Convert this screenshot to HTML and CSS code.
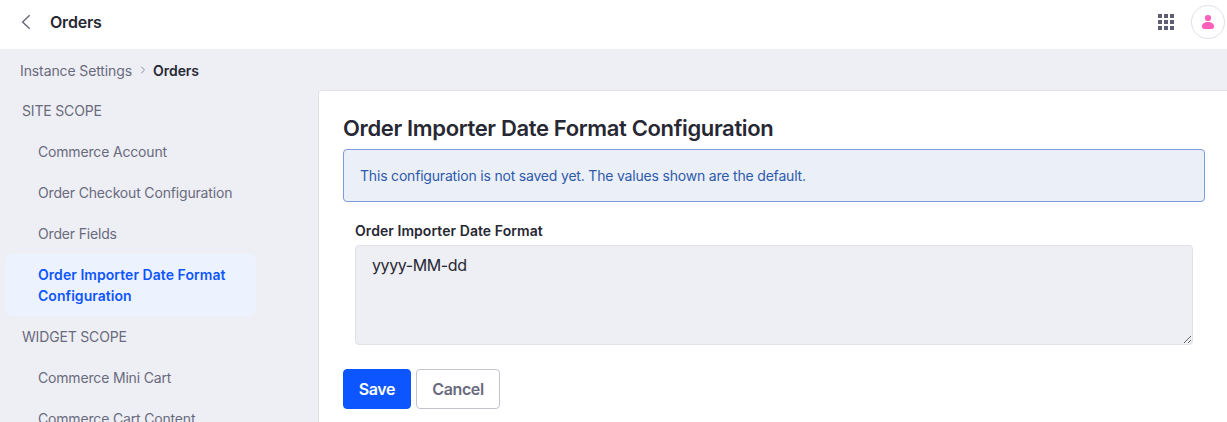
FILE: index.html
```html
<!DOCTYPE html>
<html lang="en">
<head>
<meta charset="utf-8">
<title>Orders</title>
<link rel="stylesheet" href="styles.css">
</head>
<body>
<header class="control-menu">
  <svg class="back-icon" viewBox="0 0 10 16" width="10" height="16"><path d="M8.700 1.200 1.600 8l7.100 6.800"/></svg>
  <h1 class="page-title">Orders</h1>
  <svg class="apps-icon" viewBox="0 0 16 16" width="16" height="16"><path d="M0 0h4v4H0zM6 0h4v4H6zM12 0h4v4h-4zM0 6h4v4H0zM6 6h4v4H6zM12 6h4v4h-4zM0 12h4v4H0zM6 12h4v4H6zM12 12h4v4h-4z"/></svg>
  <div class="avatar"><svg viewBox="0 0 16 16" width="16" height="16"><circle cx="8" cy="4" r="3.100"/><path d="M8 7.900c3.600 0 6.100 1.900 6.100 4.400 0 1.700-1.100 2.600-2.700 2.600H4.600c-1.600 0-2.700-.9-2.700-2.600 0-2.500 2.500-4.400 6.100-4.400z"/></svg></div>
</header>
<nav class="breadcrumb">
  <a class="crumb">Instance Settings</a>
  <svg class="crumb-sep" viewBox="0 0 6 8" width="6" height="8"><path d="M1.300.8 4.500 4 1.300 7.200"/></svg>
  <span class="crumb-active">Orders</span>
</nav>
<div class="layout">
  <aside class="sidebar">
    <div class="scope">SITE SCOPE</div>
    <a class="nav-item">Commerce Account</a>
    <a class="nav-item">Order Checkout Configuration</a>
    <a class="nav-item">Order Fields</a>
    <a class="nav-item active">Order Importer Date Format Configuration</a>
    <div class="scope">WIDGET SCOPE</div>
    <a class="nav-item">Commerce Mini Cart</a>
    <a class="nav-item">Commerce Cart Content</a>
  </aside>
  <main class="sheet">
    <h2 class="sheet-title">Order Importer Date Format Configuration</h2>
    <div class="alert">This configuration is not saved yet. The values shown are the default.</div>
    <div class="form-group">
      <label class="label" for="format">Order Importer Date Format</label>
      <textarea class="input" id="format">yyyy-MM-dd</textarea>
    </div>
    <div class="actions">
      <button class="btn primary">Save</button>
      <button class="btn secondary">Cancel</button>
    </div>
  </main>
</div>
</body>
</html>
```
FILE: styles.css
```css
* { box-sizing: border-box; }
html { height: 100%; overflow: hidden; }
body {
  display: flex;
  flex-direction: column;
  height: 100%;
  margin: 0;
  overflow: hidden;
  background: #eeeff4;
  color: #272833;
  font: 14px/21px Inter, "Liberation Sans", sans-serif;
}
.control-menu {
  display: flex;
  flex: none;
  align-items: center;
  height: 49px;
  padding: 0 2px 5px 21px;
  background: #fff;
}
.back-icon { fill: none; stroke: #6b6c7e; stroke-width: 1.5; }
.page-title { margin: 0 auto 0 19px; font-size: 16px; font-weight: 600; line-height: 24px; letter-spacing: -0.2px; }
.apps-icon { fill: #5d5e72; }
.avatar {
  display: flex;
  align-items: center;
  justify-content: center;
  width: 34px;
  height: 34px;
  margin-left: 17px;
  border: 1px solid #e0e0ea;
  border-radius: 50%;
}
.avatar svg { fill: #ff5fb9; }
.breadcrumb { display: flex; flex: none; align-items: center; height: 41px; padding: 2px 0 0 20px; }
.crumb { color: #696a7d; letter-spacing: -0.11px; }
.crumb-sep { margin: 0 7px 2px 8px; fill: none; stroke: #8b8c9b; }
.crumb-active { font-weight: 600; letter-spacing: -0.05px; }
.layout { display: flex; flex: 1; min-height: 0; overflow: hidden; }
.sidebar { width: 250px; margin: 0 62px 0 6px; flex: none; color: #696a7d; letter-spacing: -0.17px; }
.scope { height: 41px; padding: 10px 16px; }
.nav-item { display: block; padding: 10px 16px 10px 32px; height: 41px; white-space: nowrap; }
.nav-item.active {
  height: 62px;
  border-radius: 6px;
  background: #edf2ff;
  color: #0d56ff;
  font-weight: 600;
  letter-spacing: 0.05px;
  white-space: normal;
}
.sheet {
  flex: 1;
  padding: 24px 22px 0 24px;
  border: solid #e1e2e8;
  border-width: 1px 0 0 1px;
  border-radius: 4px 0 0 0;
  background: #fff;
}
.sheet-title { margin: 0 0 7px; font-size: 22px; font-weight: 600; line-height: 27px; letter-spacing: -0.35px; }
.alert {
  height: 53px;
  padding: 15px 16px;
  border: 1px solid #7b9bdc;
  border-radius: 4px;
  background: #ebeff8;
  color: #2e5aac;
  letter-spacing: -0.19px;
}
.form-group { padding: 18px 12px 0; }
.label { display: block; margin-bottom: 4px; font-weight: 600; letter-spacing: 0.06px; }
.input {
  display: block;
  width: 100%;
  height: 100px;
  padding: 7px 16px;
  border: 1px solid #e1e1e9;
  border-radius: 4px;
  background: #eeeff4;
  color: #272833;
  font: 16px/24px Inter, "Liberation Sans", sans-serif;
  letter-spacing: -0.4px;
  resize: vertical;
}
.actions { display: flex; gap: 5px; margin-top: 24px; }
.btn {
  height: 40px;
  padding: 0;
  border: 1px solid #c3c3d0;
  border-radius: 4px;
  background: #fff;
  color: #696a7d;
  font: 600 16px/24px Inter, "Liberation Sans", sans-serif;
  letter-spacing: -0.4px;
}
.primary { width: 68px; border-color: #0d56ff; background: #0d56ff; color: #fff; }
.secondary { width: 84px; }
```
